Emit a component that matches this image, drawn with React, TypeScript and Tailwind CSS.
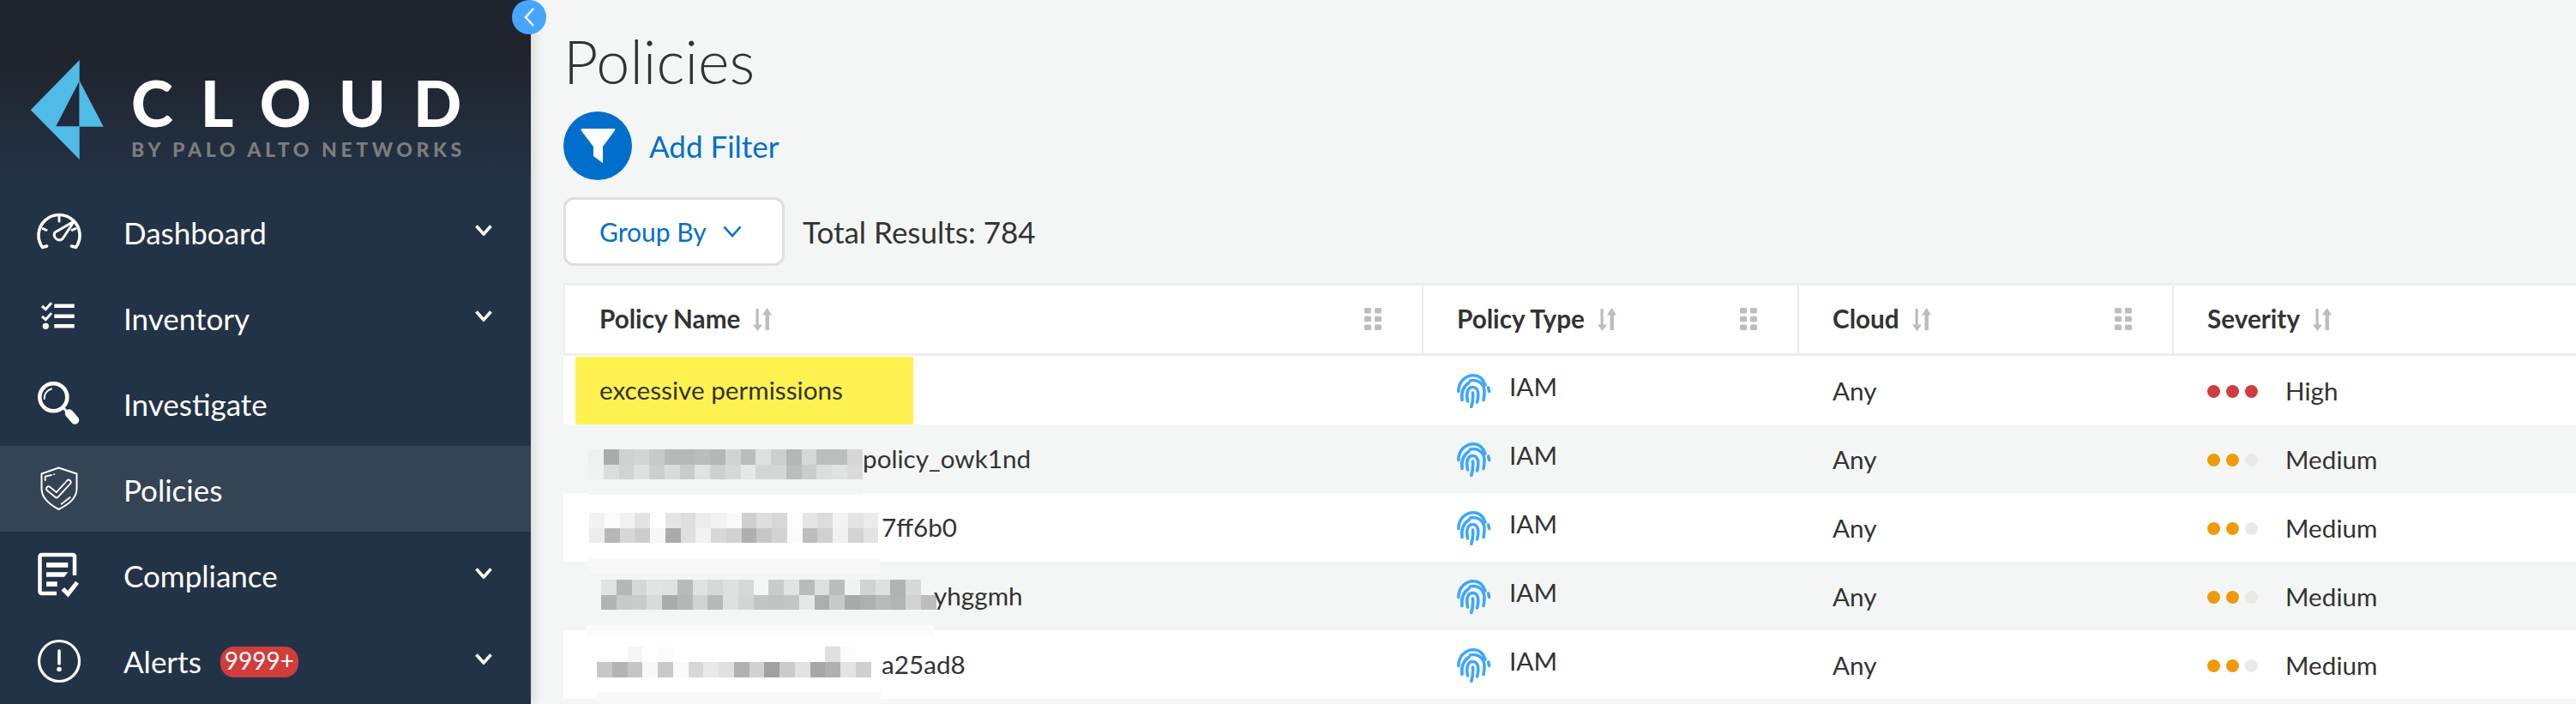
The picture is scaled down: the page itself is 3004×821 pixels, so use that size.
import React from 'react';

const columns = 'grid grid-cols-[1001px_438px_437px_1fr]';

const Chevron = () => (
	<svg width="20" height="13" viewBox="0 0 20 13" fill="none" className="ml-auto mr-[45px] -mt-[3px] shrink-0">
		<path d="M1.5 1.5 L10 11 L18.5 1.5" stroke="#fff" strokeWidth="3.6" />
	</svg>
);

const DashboardIcon = () => (
	<svg width="60" height="60" viewBox="0 0 60 60" fill="none" stroke="#fff" strokeLinecap="round" strokeLinejoin="round">
		<path d="M15.5 47 L10.5 48.5 A24 24 0 1 1 49.5 48.5 L44.5 47" strokeWidth="3.6" />
		<path d="M30 12.5 V18 M11 26.7 L15 28.3 M49 26.7 L45 28.3" strokeWidth="3" />
		<path d="M47.5 18 L34 38.5 A6 6 0 0 1 25 31 Z" strokeWidth="3" />
	</svg>
);

const InventoryIcon = () => (
	<svg width="60" height="60" viewBox="0 0 60 60" fill="none" stroke="#fff">
		<path d="M10 17 L14.3 20.7 L21 13.3 M10 29 L14.3 32.7 L21 25.3" strokeWidth="3" />
		<path d="M24.3 16.7 H47.7 M24.3 28.7 H47.7 M24.3 40.3 H47.7" strokeWidth="4.4" />
		<circle cx="14.3" cy="40.3" r="3.6" fill="#fff" stroke="none" />
	</svg>
);

const InvestigateIcon = () => (
	<svg width="60" height="60" viewBox="0 0 60 60" fill="none" stroke="#fff" strokeLinecap="round">
		<circle cx="23.3" cy="23.3" r="16" strokeWidth="4.6" />
		<path d="M12.7 25 A11 11 0 0 1 21 13.5" strokeWidth="2" />
		<path d="M36 37 L39 40" strokeWidth="3" />
		<path d="M41.5 42 L48.5 50" strokeWidth="9.5" />
	</svg>
);

const PoliciesIcon = () => (
	<svg width="60" height="60" viewBox="0 0 60 60" fill="none" stroke="#fff" strokeLinecap="round" strokeLinejoin="round">
		<path d="M29.5 5.5 L9.5 12.5 V30 C9.5 42 20 49 29.5 54 C39 49 50.5 42 50.5 30 V12.5 Z" strokeWidth="2" />
		<path d="M13.7 20 V15.7 L21 14 M24 13.2 H24.3" strokeWidth="1.8" />
		<path d="M17.7 30 L27 37.7 L41 22.3" strokeWidth="7" />
		<path d="M17.7 30 L27 37.7 L41 22.3" stroke="#344454" strokeWidth="3.4" />
		<path d="M32.7 47.7 L42.7 40" strokeWidth="1.8" />
	</svg>
);

const ComplianceIcon = () => (
	<svg width="60" height="60" viewBox="0 0 60 60" fill="none" stroke="#fff">
		<path d="M48 31 V9 A2 2 0 0 0 46 7 H9.5 A2 2 0 0 0 7.5 9 V50 A2 2 0 0 0 9.5 52 H27" strokeWidth="4.5" />
		<path d="M15 16 H40.3 V21.7 H15 Z M15 27.3 H40.3 L36 32.7 H15 Z M15 38.3 H27.7 V44 H15 Z" fill="#fff" stroke="none" />
		<path d="M34.3 46.7 L40.3 52.7 L51 39.3" strokeWidth="5" />
	</svg>
);

const AlertsIcon = () => (
	<svg width="60" height="60" viewBox="0 0 60 60" fill="none" stroke="#fff" strokeLinecap="round">
		<circle cx="30" cy="31" r="23.5" strokeWidth="3.2" />
		<path d="M30 19 V34" strokeWidth="3.6" />
		<circle cx="30" cy="40.5" r="2.8" fill="#fff" stroke="none" />
	</svg>
);

const navItems = [
	{ label: 'Dashboard', icon: <DashboardIcon />, expand: true },
	{ label: 'Inventory', icon: <InventoryIcon />, expand: true },
	{ label: 'Investigate', icon: <InvestigateIcon /> },
	{ label: 'Policies', icon: <PoliciesIcon />, active: true },
	{ label: 'Compliance', icon: <ComplianceIcon />, expand: true },
	{ label: 'Alerts', icon: <AlertsIcon />, expand: true, badge: '9999+' },
];

const Logo = () => (
	<svg width="122" height="122" viewBox="0 0 122 122" fill="#4fbbe6" className="shrink-0">
		<path d="M92.7 2 L35.7 60.3 L92.7 118 V79.7 H65 L92.7 26.3 Z" />
		<path d="M92.7 26.3 L120.7 79.7 H92.7 Z" />
		<path d="M65 79.5 H92.7 V26.5" fill="none" stroke="#4fbbe6" strokeOpacity="0.6" strokeWidth="1" />
	</svg>
);

const Sidebar = () => (
	<aside className="relative z-10 w-[619px] shrink-0 bg-[#233347] text-white shadow-[0_0_16px_rgba(0,0,0,0.18)]">
		<div className="h-[220px] bg-gradient-to-b from-[#20242d] from-[30%] to-[#233347] flex items-start pt-[68px]">
			<Logo />
			<div className="ml-[31px] flex flex-col pt-[20px]">
				<span className="text-[74px] leading-[60px] font-black tracking-[32px] pt-[2px]">CLOUD</span>
				<span className="mt-[11px] text-[23px] leading-[26px] font-black tracking-[4.6px] text-[#7d7d7d] whitespace-nowrap">
					BY PALO ALTO NETWORKS
				</span>
			</div>
		</div>
		<nav>
			{navItems.map((item) => (
				<div
					key={item.label}
					className={`flex items-center h-[100px] pl-[39px] ${item.active ? 'bg-[#344454]' : ''}`}
				>
					{item.icon}
					<span className="ml-[45px] pt-[3px] text-[35px] leading-none">{item.label}</span>
					{item.badge && (
						<span className="ml-[22px] h-[36px] w-[91px] mt-[3px] pb-[3px] rounded-[16px] bg-[#d13c3c] flex items-center justify-center text-[28px] leading-none">
							{item.badge}
						</span>
					)}
					{item.expand && <Chevron />}
				</div>
			))}
		</nav>
	</aside>
);

const SortIcon = () => (
	<svg width="22" height="27" viewBox="0 0 22 27" fill="#bdbdbd" className="ml-[15px] shrink-0">
		<path d="M3.5 1 H6.7 V19.5 H11 L5.5 27 L0 19.5 H3.5 Z" />
		<path d="M16.5 0 L22 8.5 H19 V26 H14.5 V8.5 H11 Z" />
	</svg>
);

const GripIcon = () => (
	<svg width="20" height="26" viewBox="0 0 20 26" fill="#bdbdbd" className="ml-auto mr-[47px] shrink-0">
		<rect x="0" y="0" width="8" height="6.5" rx="1.5" />
		<rect x="12" y="0" width="8" height="6.5" rx="1.5" />
		<rect x="0" y="9.8" width="8" height="6.5" rx="1.5" />
		<rect x="12" y="9.8" width="8" height="6.5" rx="1.5" />
		<rect x="0" y="19.5" width="8" height="6.5" rx="1.5" />
		<rect x="12" y="19.5" width="8" height="6.5" rx="1.5" />
	</svg>
);

const FingerprintIcon = () => (
	<svg width="40" height="40" viewBox="0 0 40 40" fill="none" stroke="#3ea6ff" strokeWidth="3.6" strokeLinecap="round" className="shrink-0">
		<path d="M1.8 20.5 C2 9 10 1.8 19.5 1.8 C25.5 1.8 30.5 6 33 13" />
		<path d="M36.7 16 L37.6 20.5" />
		<path d="M6 30.5 C5 22 7.5 14.5 13.8 10.5" />
		<path d="M15.5 8 C24 6 31.5 11 32 20 C32.2 24 31.5 27.5 31 30.5" />
		<path d="M12.5 32 C10.5 22 12.5 15.5 18.5 15.5 C25 15.5 26 23.5 23.5 33" />
		<path d="M18.5 22 C19 28 18.5 33 16.8 38.4" />
	</svg>
);

type PixelRun = {
	width: number;
	left: number;
	startX: number;
	startY: number;
	cellH: number;
	colors: string[][];
	faint: { x: number; y: number; w: number; h: number; color: string };
};

const Pixels = ({ width, left, startX, startY, cellH, colors, faint }: PixelRun) => (
	<svg
		width={width}
		height="80"
		viewBox={`0 0 ${width} 80`}
		className="relative z-10 shrink-0 overflow-visible"
		style={{ marginLeft: left }}
		shapeRendering="crispEdges"
	>
		<rect x={faint.x} y={faint.y} width={faint.w} height={faint.h} fill={faint.color} />
		{colors.map((row, r) =>
			row.map((c, i) => (
				<rect key={`${r}-${i}`} x={startX + i * 17.75} y={startY + r * cellH} width="17.9" height={cellH} fill={c} />
			)),
		)}
	</svg>
);

const policyRows: { pixels: PixelRun; suffix: string }[] = [
	{
		suffix: 'policy_owk1nd',
		pixels: {
			width: 320,
			left: 29,
			startX: 0,
			startY: 29,
			cellH: 17.5,
			faint: { x: 0, y: 64, w: 320, h: 18, color: '#f4f6f5' },
			colors: [
				['#eff0f0', '#a9acab', '#d0d2d1', '#d3d5d4', '#c8cbca', '#b6b9b8', '#b6b9b8', '#babdbc', '#b4b7b6', '#d2d4d3', '#babdbc', '#dde0df', '#cdd0cf', '#b4b7b6', '#d5d8d7', '#bcbdbd', '#bcbebd', '#d5d7d6'],
				['#f0f1f1', '#dcdedd', '#d2d4d3', '#dfe1e0', '#cdcfce', '#dadcdb', '#c9cccb', '#e1e3e2', '#ccd0cf', '#d7d9d8', '#e6e8e7', '#d4d6d5', '#d5d7d6', '#babdbc', '#cbcdcc', '#dcdddd', '#e1e3e2', '#d9dbda'],
			],
		},
	},
	{
		suffix: '7ff6b0',
		pixels: {
			width: 341,
			left: 30,
			startX: 0,
			startY: 23,
			cellH: 17.5,
			faint: { x: 0, y: 76, w: 340, h: 18, color: '#f8f8f8' },
			colors: [
				['#f2f2f2', '#fbfbfb', '#f2f2f2', '#e3e3e3', '#ffffff', '#e5e5e5', '#dedede', '#ececec', '#f2f2f2', '#f9f9f9', '#cfcfcf', '#dedede', '#d7d7d7', '#fefefe', '#e5e5e5', '#dcdcdc', '#f3f3f3', '#e4e4e4', '#ebebeb'],
				['#ececec', '#b7b7b7', '#d7d7d7', '#cdcdcd', '#f6f6f6', '#ababab', '#dfdfdf', '#f2f2f2', '#d8d8d8', '#d2d2d2', '#afafaf', '#c7c7c7', '#d2d2d2', '#fbfbfb', '#bdbdbd', '#d0d0d0', '#f0f0f0', '#d3d3d3', '#e3e3e3'],
			],
		},
	},
	{
		suffix: 'yhggmh',
		pixels: {
			width: 406,
			left: 26,
			startX: 18,
			startY: 21,
			cellH: 17.5,
			faint: { x: 0, y: 74, w: 406, h: 14, color: '#fafbfa' },
			colors: [
				['#e1e3e2', '#b5b8b7', '#d5d8d7', '#e3e5e4', '#e1e3e2', '#b8bbba', '#e0e2e1', '#d6d8d7', '#dfe1e0', '#d5d8d7', '#f4f6f5', '#c9cccb', '#e2e4e3', '#b9bcbb', '#dde0df', '#babdbc', '#f1f3f2', '#d1d3d2', '#dde0df', '#b0b3b2', '#d8dad9'],
				['#b1b4b3', '#c8cbca', '#c9cccb', '#d9dbda', '#a9acab', '#b4b7b6', '#d1d3d2', '#b6b9b8', '#dfe1e0', '#d4d6d5', '#c3c5c4', '#bfc2c1', '#c3c6c5', '#e6e8e7', '#adafae', '#c7cac9', '#a7aaa9', '#adb0af', '#b8bbba', '#b2b5b4', '#d1d3d2', '#bbbebd'],
			],
		},
	},
	{
		suffix: 'a25ad8',
		pixels: {
			width: 332,
			left: 39,
			startX: 0,
			startY: 19,
			cellH: 18,
			faint: { x: 0, y: 72, w: 331, h: 14, color: '#f8f8f8' },
			colors: [
				['#ffffff', '#ffffff', '#f6f6f6', '#ffffff', '#fbfbfb', '#ffffff', '#ffffff', '#ffffff', '#ffffff', '#ffffff', '#ffffff', '#ffffff', '#ffffff', '#ffffff', '#ffffff', '#e0e0e0', '#fcfcfc', '#ffffff'],
				['#c7c7c7', '#b3b3b3', '#c5c5c5', '#f8f8f8', '#c8c8c8', '#f9f9f9', '#d7d7d7', '#e9e9e9', '#e0e0e0', '#b1b1b1', '#d1d1d1', '#a0a0a0', '#cbcbcb', '#e2e2e2', '#a7a7a7', '#b0b0b0', '#e3e3e3', '#cfcfcf'],
			],
		},
	},
];

const severityDots = {
	High: ['bg-[#d13c3c]', 'bg-[#d13c3c]', 'bg-[#d13c3c]'],
	Medium: ['bg-[#f09a09]', 'bg-[#f09a09]', 'bg-[#e9e9e9]'],
};

const SharedCells = ({ severity }: { severity: 'High' | 'Medium' }) => (
	<>
		<div className="flex items-center pl-[41px] pt-[2px]">
			<FingerprintIcon />
			<span className="ml-[21px] -mt-[9px]">IAM</span>
		</div>
		<div className="flex items-center pl-[41px] pt-[2px]">Any</div>
		<div className="flex items-center pl-[41px] pt-[2px]">
			<div className="flex gap-[7px]">
				{severityDots[severity].map((color, idx) => (
					<span key={idx} className={`w-[15px] h-[15px] rounded-full ${color}`} />
				))}
			</div>
			<span className="ml-[32px]">{severity}</span>
		</div>
	</>
);

const headers = ['Policy Name', 'Policy Type', 'Cloud', 'Severity'];

const PolicyTable = () => (
	<div className="text-[#333] text-[29.7px]">
		<div className="grid grid-cols-[999px_438px_437px_1fr] h-[85px] bg-white border-t-[3px] border-b-[3px] border-l-[2px] border-[#eceeed]">
			{headers.map((header, idx) => (
				<div
					key={header}
					className={`flex items-center font-bold pb-[1px] ${idx > 0 ? 'border-l-2 border-[#e9eaea] pl-[39px]' : 'pl-[40px]'}`}
				>
					{header}
					<SortIcon />
					{idx < 3 && <GripIcon />}
				</div>
			))}
		</div>
		<div className={`${columns} h-[80px] bg-white`}>
			<div className="flex">
				<div className="ml-[14px] mt-[1px] w-[394px] bg-[#fff250] flex items-center pl-[28px]">excessive permissions</div>
			</div>
			<SharedCells severity="High" />
		</div>
		{policyRows.map((row, idx) => (
			<div key={row.suffix} className={`${columns} h-[80px] ${idx % 2 === 0 ? 'bg-[#f4f6f5]' : 'bg-white'}`}>
				<div className="flex items-center">
					<Pixels {...row.pixels} />
					<span className="relative z-20">{row.suffix}</span>
				</div>
				<SharedCells severity="Medium" />
			</div>
		))}
	</div>
);

const App: React.FC = () => (
	<div className="relative flex w-[3004px] h-[821px] overflow-hidden bg-[#f4f6f5] font-['Lato',sans-serif]">
		<Sidebar />
		<main className="flex-1 min-w-0 pl-[38px]">
			<h1 className="h-[130px] pt-[31px] text-[70px] leading-[80px] font-light text-[#333]">Policies</h1>
			<div className="flex items-center h-[80px]">
				<div className="w-[80px] h-[80px] rounded-full bg-[#006fcc] flex items-center justify-center">
					<svg width="80" height="80" viewBox="0 0 80 80" fill="#fff">
						<path d="M20.5 22 Q20 20 22 20 H59 Q61 20 60 22 L46 41 V59 Q46 60.5 45 59.5 L35 52 V41 Z" />
					</svg>
				</div>
				<span className="ml-[20px] text-[35px] leading-none text-[#006fcc]">Add Filter</span>
			</div>
			<div className="flex items-center h-[80px] mt-[20px] mb-[20px]">
				<div className="w-[258px] h-[80px] rounded-[12px] border-[3px] border-[#dedede] bg-white flex items-center pl-[39px] text-[30px] text-[#006fcc]">
					Group By
					<svg width="22" height="14" viewBox="0 0 22 14" fill="none" className="ml-[19px]">
						<path d="M1.5 1.5 L11 12 L20.5 1.5" stroke="#006fcc" strokeWidth="2.6" />
					</svg>
				</div>
				<span className="ml-[21px] text-[35px] text-[#333]">Total Results: 784</span>
			</div>
			<PolicyTable />
		</main>
		<button className="absolute left-[597px] top-0 z-20 w-[40px] h-[40px] rounded-full bg-[#46a6ff] flex items-center justify-center">
			<svg width="14" height="24" viewBox="0 0 14 24" fill="none">
				<path d="M12 2 L3 12 L12 22" stroke="#fff" strokeWidth="2.4" />
			</svg>
		</button>
	</div>
);

export default App;
